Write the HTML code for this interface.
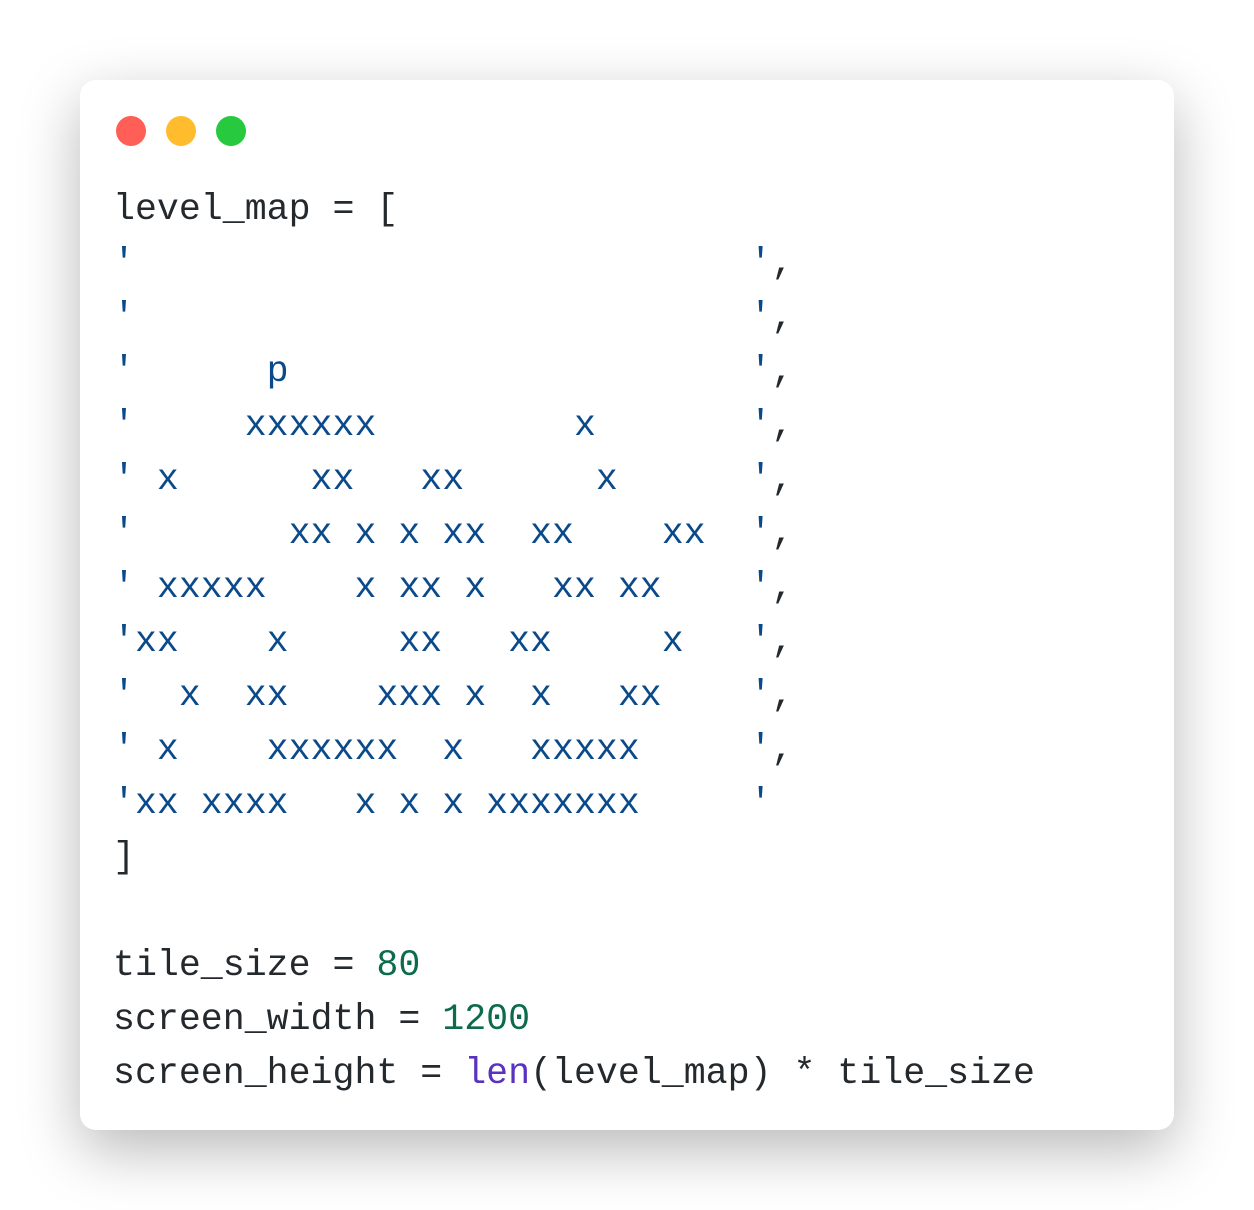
<!DOCTYPE html>
<html><head><meta charset="utf-8"><style>
html,body{margin:0;padding:0;background:#fff;width:1254px;height:1210px;overflow:hidden}
.card{position:absolute;left:80px;top:80px;width:1094px;height:1050px;background:#fff;border-radius:16px;box-shadow:0 20px 60px rgba(0,0,0,0.28)}
.dot{position:absolute;top:116px;width:30px;height:30px;border-radius:50%}
pre{position:absolute;left:113px;top:183px;margin:0;font-family:"Liberation Mono",monospace;font-size:36.6px;line-height:54px;color:#24292e;white-space:pre}
.s{color:#0b4a8a}.n{color:#0b6b4b}.f{color:#5a32c0}
</style></head><body>
<div class="card"></div>
<div class="dot" style="left:116px;background:#ff5f56"></div>
<div class="dot" style="left:166px;background:#ffbd2e"></div>
<div class="dot" style="left:216px;background:#27c93f"></div>
<pre>level_map = [
<span class="s">'                            '</span>,
<span class="s">'                            '</span>,
<span class="s">'      p                     '</span>,
<span class="s">'     xxxxxx         x       '</span>,
<span class="s">' x      xx   xx      x      '</span>,
<span class="s">'       xx x x xx  xx    xx  '</span>,
<span class="s">' xxxxx    x xx x   xx xx    '</span>,
<span class="s">'xx    x     xx   xx     x   '</span>,
<span class="s">'  x  xx    xxx x  x   xx    '</span>,
<span class="s">' x    xxxxxx  x   xxxxx     '</span>,
<span class="s">'xx xxxx   x x x xxxxxxx     '</span>
]

tile_size = <span class="n">80</span>
screen_width = <span class="n">1200</span>
screen_height = <span class="f">len</span>(level_map) * tile_size</pre>
</body></html>
